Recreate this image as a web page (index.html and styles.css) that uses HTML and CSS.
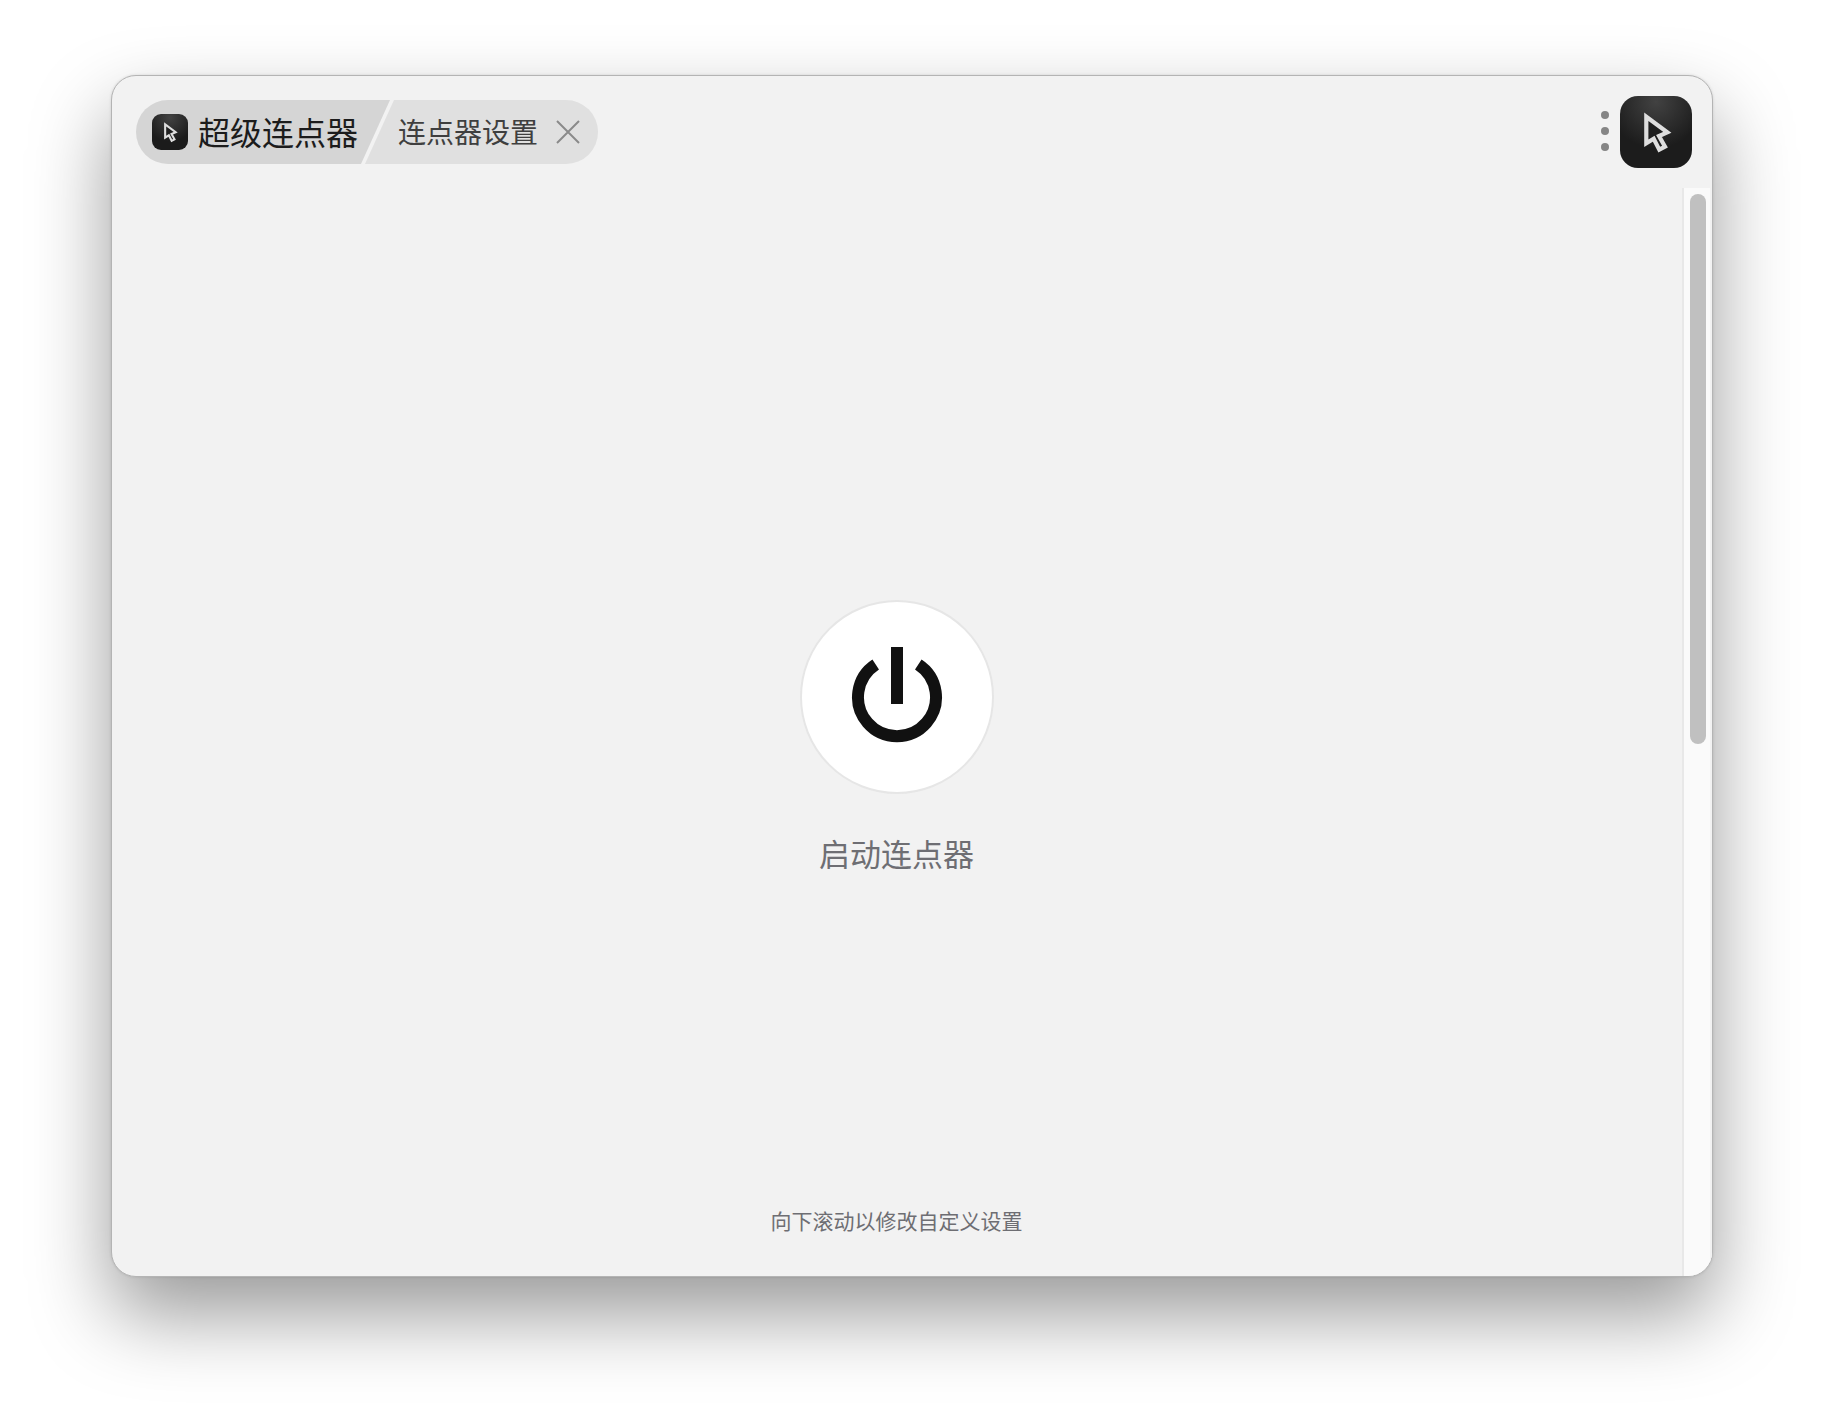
FILE: index.html
```html
<!DOCTYPE html>
<html lang="zh-CN">
<head>
<meta charset="utf-8">
<title>超级连点器</title>
<link rel="stylesheet" href="styles.css">
</head>
<body>
<div class="window">
  <header class="header">
    <div class="tabs">
      <div class="tab-main">
        <span class="app-icon">
          <svg class="cursor" viewBox="0 0 72 72"><path d="M26.3 20.7 47.3 36.3 39 40 45 50.7 39.3 53.7 33.7 42.7 26.3 47.3Z"/></svg>
        </span>
        <span class="tab-title">超级连点器</span>
      </div>
      <div class="tab-sub">
        <span class="tab-sub-title">连点器设置</span>
        <svg class="close" viewBox="0 0 24 24"><path d="M1 1 23 23M23 1 1 23"/></svg>
      </div>
    </div>
    <div class="actions">
      <div class="dots"><i></i><i></i><i></i></div>
      <div class="big-icon">
        <svg class="cursor big" viewBox="0 0 72 72"><path d="M26.3 20.7 47.3 36.3 39 40 45 50.7 39.3 53.7 33.7 42.7 26.3 47.3Z"/></svg>
      </div>
    </div>
  </header>
  <div class="body">
    <main class="main">
      <button class="power">
        <svg class="power-icon" viewBox="0 0 92 100"><path d="M24.7 20.5A39 39 0 1 0 67.3 20.5"/><path d="M46 3V60"/></svg>
      </button>
      <div class="label">启动连点器</div>
      <div class="hint">向下滚动以修改自定义设置</div>
    </main>
    <aside class="track"><div class="thumb"></div></aside>
  </div>
</div>
</body>
</html>
```
FILE: styles.css
```css
* { box-sizing: border-box; }
html, body { margin: 0; height: 100%; }
body {
  width: 1824px;
  height: 1424px;
  padding: 75px 0 0 111px;
  overflow: hidden;
  background: #fff;
  font-family: "Noto Sans CJK SC", "Noto Sans", sans-serif;
}
.window {
  width: 1602px;
  height: 1202px;
  display: flex;
  flex-direction: column;
  background: #f2f2f2;
  border: 1px solid #b4b4b4;
  border-radius: 25px;
  box-shadow: 0 38px 80px rgba(0, 0, 0, .4), 0 0 3px rgba(0, 0, 0, .12);
  overflow: hidden;
}
.header {
  height: 112px;
  flex: none;
  display: flex;
  justify-content: space-between;
  align-items: flex-start;
  padding: 20px 20px 0 24px;
}
.tabs { display: flex; margin-top: 4px; height: 64px; }
.tab-main {
  width: 254px;
  display: flex;
  align-items: center;
  gap: 10px;
  padding-left: 16px;
  background: #d5d5d5;
  border-radius: 32px 0 0 32px;
  clip-path: polygon(0 0, 100% 0, calc(100% - 29px) 100%, 0 100%);
}
.app-icon {
  width: 36px;
  height: 36px;
  flex: none;
  border-radius: 9px;
  background: radial-gradient(circle at 50% 10%, #424242, #1b1b1b 65%);
}
.cursor { display: block; width: 36px; height: 36px; }
.cursor path { fill: #1f1f1f; stroke: #dedede; stroke-width: 4.2; stroke-linejoin: miter; stroke-miterlimit: 10; }
.cursor.big { width: 72px; height: 72px; }
.tab-title { font-size: 32px; line-height: 44px; color: #1c1c1c; white-space: nowrap; margin-top: -3px; }
.tab-sub {
  width: 233px;
  margin-left: -25px;
  display: flex;
  align-items: center;
  padding-left: 33px;
  gap: 18px;
  background: #e0e0e0;
  border-radius: 0 32px 32px 0;
  clip-path: polygon(29px 0, 100% 0, 100% 100%, 0 100%);
}
.tab-sub-title { font-size: 28px; line-height: 40px; color: #3f3f3f; white-space: nowrap; margin-top: -2px; }
.close { width: 24px; height: 24px; flex: none; }
.close path { fill: none; stroke: #8a8a8a; stroke-width: 2; }
.actions { display: flex; align-items: center; gap: 11px; }
.dots { display: flex; flex-direction: column; gap: 8px; margin-top: -2px; }
.dots i { display: block; width: 8px; height: 8px; border-radius: 50%; background: #858585; }
.big-icon {
  width: 72px;
  height: 72px;
  border-radius: 18px;
  background: radial-gradient(circle at 50% 8%, #424242, #1c1c1c 62%);
}
.body { flex: 1; display: flex; min-height: 0; }
.main {
  flex: 1;
  display: flex;
  flex-direction: column;
  align-items: center;
  padding-top: 412px;
}
.power {
  width: 194px;
  height: 194px;
  flex: none;
  padding: 0;
  margin-right: 1px;
  display: flex;
  align-items: center;
  justify-content: center;
  border: 2px solid #e6e6e6;
  border-radius: 50%;
  background: #fff;
}
.power-icon { width: 92px; height: 100px; display: block; margin-top: -6px; }
.power-icon path { fill: none; stroke: #111; stroke-width: 12; }
.label {
  margin: 36px 1px 0 0;
  font-size: 31px;
  line-height: 46px;
  color: #6e6e73;
}
.hint {
  margin: auto 1px 0 0;
  padding-bottom: 41px;
  font-size: 21px;
  line-height: 30px;
  color: #6e6e73;
}
.track {
  width: 30px;
  flex: none;
  padding: 6px 0 0 6px;
  background: #fafafa;
  border-left: 2px solid #e8e8e8;
  border-right: 2px solid #f2f2f2;
}
.thumb { width: 16px; height: 550px; border-radius: 8px; background: #c0c0c0; }
```
